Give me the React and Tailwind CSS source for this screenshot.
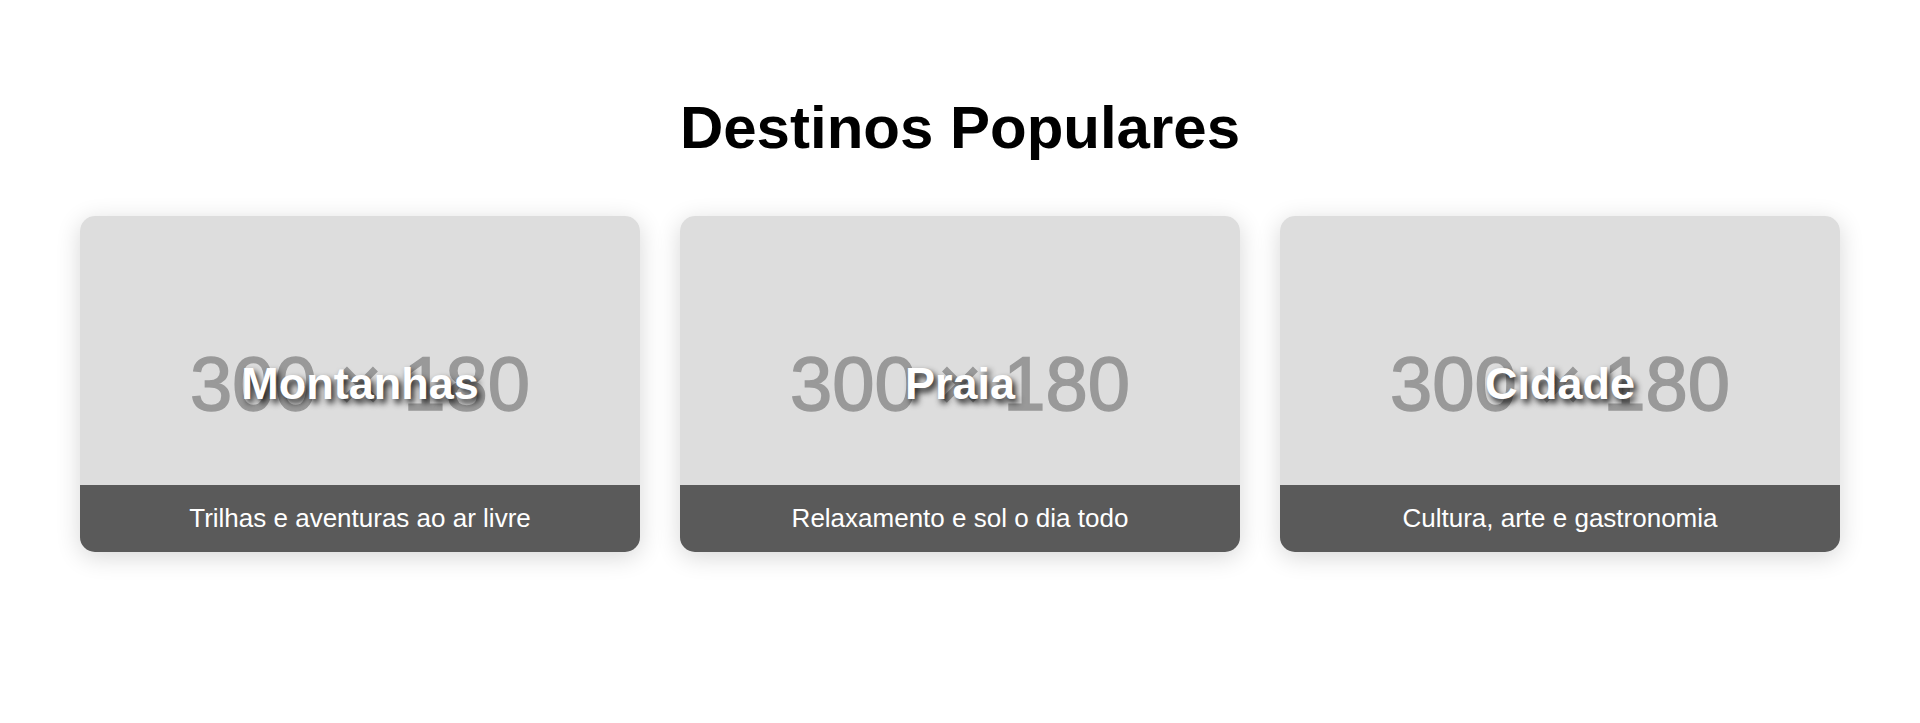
const destinos = [
  { nome: 'Montanhas', descricao: 'Trilhas e aventuras ao ar livre' },
  { nome: 'Praia', descricao: 'Relaxamento e sol o dia todo' },
  { nome: 'Cidade', descricao: 'Cultura, arte e gastronomia' },
];

// stand-in for the 300x180 placeholder image
const Placeholder = () => (
  <div className="w-full h-[336px] bg-[#dddddd] flex items-center justify-center">
    <span className="text-[76px] leading-none text-[#999999] [-webkit-text-stroke:1.5px_#999999]">300 × 180</span>
  </div>
);

const Card = ({ nome, descricao }) => (
  <div className="relative overflow-hidden rounded-[15px] shadow-[0_5px_24px_rgba(0,0,0,0.16)]">
    <Placeholder />
    <div className="absolute inset-0 flex items-center justify-center">
      <h3 className="text-[45px] font-bold text-white [text-shadow:3px_4px_6px_rgba(0,0,0,0.9)]">
        {nome}
      </h3>
    </div>
    <div className="absolute bottom-0 left-0 right-0 h-[67px] bg-[#5a5a5a] flex items-center justify-center">
      <p className="text-[26px] text-white">{descricao}</p>
    </div>
  </div>
);

export default function App() {
  return (
    <div className="min-h-screen bg-white px-20 pt-[94px] pb-20 font-['Liberation_Sans',Arial,sans-serif]">
      <h1 className="text-center text-[60px] font-bold leading-[67px] text-black">Destinos Populares</h1>
      <div className="mt-[55px] grid grid-cols-3 gap-10">
        {destinos.map((d) => (
          <Card key={d.nome} {...d} />
        ))}
      </div>
    </div>
  );
}
